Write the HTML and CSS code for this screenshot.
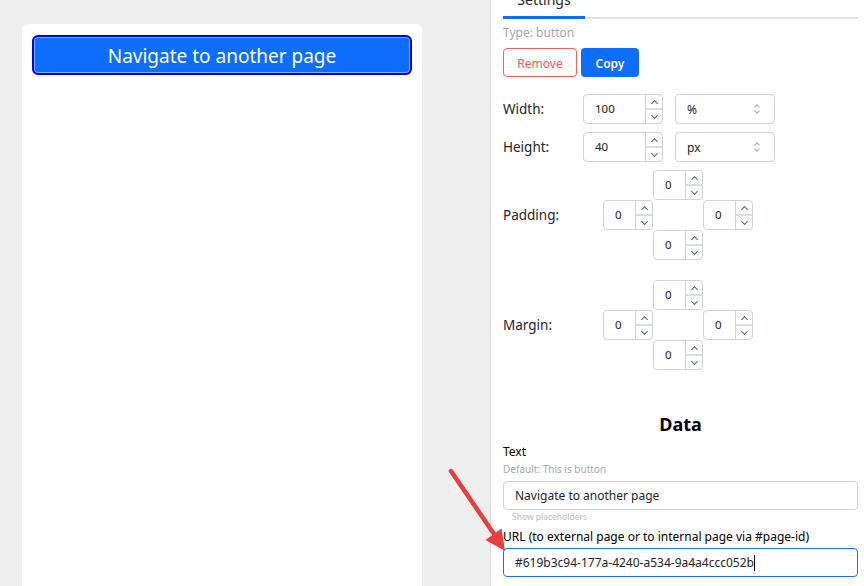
FILE: index.html
```html
<!DOCTYPE html>
<html lang="en">
<head>
    <meta charset="UTF-8">
    <title>Page editor</title>
    <link rel="stylesheet" href="styles.css">
</head>

<body>

<div class="editor">

    <div class="canvas">
        <div class="page">
            <button class="nav-button">Navigate to another page</button>
        </div>
    </div>

    <aside class="panel">

        <div class="tabs">
            <span class="tab active">Settings</span>
        </div>

        <div class="type">Type: button</div>

        <div class="actions">
            <button class="btn remove">Remove</button>
            <button class="btn copy">Copy</button>
        </div>

        <div class="row first">
            <label>Width:</label>
            <div class="num wide"><span class="val">100</span><span class="spin"><i class="up"></i><i class="down"></i></span></div>
            <div class="select"><span>%</span><span class="chev"></span></div>
        </div>

        <div class="row">
            <label>Height:</label>
            <div class="num wide"><span class="val">40</span><span class="spin"><i class="up"></i><i class="down"></i></span></div>
            <div class="select"><span>px</span><span class="chev"></span></div>
        </div>

        <div class="row box-row">
            <label>Padding:</label>
            <div class="cross">
                <div class="num top"><span class="val">0</span><span class="spin"><i class="up"></i><i class="down"></i></span></div>
                <div class="num left"><span class="val">0</span><span class="spin"><i class="up"></i><i class="down"></i></span></div>
                <div class="num right"><span class="val">0</span><span class="spin"><i class="up"></i><i class="down"></i></span></div>
                <div class="num bottom"><span class="val">0</span><span class="spin"><i class="up"></i><i class="down"></i></span></div>
            </div>
        </div>

        <div class="row box-row margin-row">
            <label>Margin:</label>
            <div class="cross">
                <div class="num top"><span class="val">0</span><span class="spin"><i class="up"></i><i class="down"></i></span></div>
                <div class="num left"><span class="val">0</span><span class="spin"><i class="up"></i><i class="down"></i></span></div>
                <div class="num right"><span class="val">0</span><span class="spin"><i class="up"></i><i class="down"></i></span></div>
                <div class="num bottom"><span class="val">0</span><span class="spin"><i class="up"></i><i class="down"></i></span></div>
            </div>
        </div>

        <h3 class="section-title">Data</h3>

        <div class="field-label">Text</div>
        <div class="hint">Default: This is button</div>
        <div class="text-input">Navigate to another page</div>
        <div class="placeholders">Show placeholders</div>

        <div class="field-label url">URL (to external page or to internal page via #page-id)</div>
        <div class="text-input focus">#619b3c94-177a-4240-a534-9a4a4ccc052b<span class="caret"></span></div>

    </aside>

    <!-- annotation arrow drawn over the screenshot -->
    <svg class="arrow" width="864" height="586" viewBox="0 0 864 586">
        <line x1="451" y1="471" x2="494" y2="534" stroke="#e53f3f" stroke-width="4.5" stroke-linecap="round"/>
        <polygon points="505,551 485.5,540 501.5,528.5" fill="#e53f3f"/>
    </svg>

</div>

</body>
</html>
```

FILE: styles.css
```css
* {
    box-sizing: border-box;
}
body {
    margin:      0;
    font-family: "Noto Sans", "Open Sans", sans-serif;
    color:       #212529;
}

.editor {
    position:   relative;
    display:    flex;
    height:     586px;
    overflow:   hidden;
}

/* the page preview on the left */
.canvas {
    flex:       none;
    width:      490px;
    background: #eeeeee;
    padding:    24px 0 0 22px;
}
.page {
    width:      400px;
    height:     100%;
    background: white;
    border-radius: 6px 6px 0 0;
    padding:    11px 10px;
}
.nav-button {
    display:    block;
    width:      100%;
    height:     40px;
    background: #0d6efd;
    border:     2px solid #0000e6;
    border-radius: 6px;
    box-shadow: inset 0 0 0 1px rgba(255,255,255,0.45);
    color:      white;
    font-family: inherit;
    font-size:  19px;
    padding:    2px 0 0;
}

/* the settings panel on the right */
.panel {
    flex:       1;
    background: white;
    border-left: 1px solid #dcdcdc;
    padding:    0 6px 0 12px;
}

.tabs {
    display:    flex;
    margin-top: -20px;
    border-bottom: 2px solid #dee2e6;
}
.tab {
    width:      82px;
    text-align: center;
    font-size:  14px;
    line-height: 20px;
    padding:    10px 0 6px;
    margin-bottom: -2px;
    border-bottom: 3px solid transparent;
    color:      #212529;
}
.tab.active {
    border-bottom-color: #0d6efd;
}

.type {
    margin-top: 6px;
    font-size:  12px;
    line-height: 16px;
    color:      #a3a6ad;
}

.actions {
    display:    flex;
    gap:        4px;
    margin-top: 7px;
}
.btn {
    height:     29px;
    padding:    1px 0 0;
    border-radius: 4px;
    font-family: inherit;
    font-size:  12px;
}
.btn.remove {
    width:      74px;
    background: white;
    border:     1px solid #f16063;
    color:      #f0565a;
}
.btn.copy {
    width:      58px;
    background: #0d6efd;
    border:     none;
    color:      white;
    font-weight: 600;
}

.row {
    display:    flex;
    align-items: center;
    margin-top: 8px;
}
.row.first {
    margin-top: 17px;
}
.row.margin-row {
    margin-top: 20px;
}
.row label {
    width:      80px;
    font-size:  13.5px;
    color:      #212529;
}
.row.box-row label {
    width:      100px;
}

/* number input with spinner */
.num {
    display:    flex;
    height:     30px;
    border:     1px solid #ced4da;
    border-radius: 4px;
    background: white;
}
.num.wide {
    width:      80px;
}
.num .val {
    flex:       1;
    padding-left: 11px;
    font-size:  11.5px;
    line-height: 28px;
    color:      #222;
}
.spin {
    width:      17px;
    display:    flex;
    flex-direction: column;
    border-left: 1px solid #ced4da;
}
.spin i {
    flex:       1;
    display:    grid;
    place-items: center;
}
.spin i + i {
    border-top: 2px solid #dadde1;
}
.spin i::before {
    content:    '';
    width:      4px;
    height:     4px;
    border:     solid #5f6368;
    transform:  rotate(45deg);
}
.spin .up::before {
    border-width: 1px 0 0 1px;
    margin-top: 3px;
}
.spin .down::before {
    border-width: 0 1px 1px 0;
    margin-bottom: 2px;
}

.select {
    display:    flex;
    align-items: center;
    justify-content: space-between;
    width:      100px;
    height:     30px;
    margin-left: 12px;
    padding:    0 14px 0 11px;
    border:     1px solid #ced4da;
    border-radius: 4px;
    font-size:  12px;
}
.chev {
    position:   relative;
    width:      6px;
    height:     10px;
}
.chev::before,
.chev::after {
    content:    '';
    position:   absolute;
    left:       1px;
    width:      3px;
    height:     3px;
    border:     solid #a9adb3;
    transform:  rotate(45deg);
}
.chev::before {
    top:        1px;
    border-width: 1px 0 0 1px;
}
.chev::after {
    bottom:     1px;
    border-width: 0 1px 1px 0;
}

/* four inputs laid out as a cross */
.cross {
    display:    grid;
    grid-template-columns: repeat(3, 50px);
    grid-template-rows:    repeat(3, 30px);
}
.cross .top    { grid-area: 1 / 2; }
.cross .left   { grid-area: 2 / 1; }
.cross .right  { grid-area: 2 / 3; }
.cross .bottom { grid-area: 3 / 2; }

.section-title {
    margin:     42px 0 0;
    text-align: center;
    font-size:  18px;
    line-height: 24px;
    font-weight: 700;
    color:      black;
}

.field-label {
    margin-top: 8px;
    font-size:  12px;
    line-height: 16px;
    color:      black;
}
.field-label.url {
    margin-top: 5px;
}
.hint {
    margin-top: 2px;
    font-size:  10px;
    line-height: 14px;
    color:      #a6a9ae;
}
.text-input {
    display:    flex;
    align-items: center;
    height:     29px;
    margin-top: 5px;
    padding-left: 11px;
    border:     1px solid #ced4da;
    border-radius: 4px;
    font-size:  12px;
    color:      #212529;
}
.field-label.url + .text-input {
    margin-top: 3px;
}
.text-input.focus {
    border-color: #1a6ff5;
}
.caret {
    width:      1px;
    height:     16px;
    background: black;
}
.placeholders {
    padding-left: 9px;
    font-size:  8.5px;
    line-height: 14px;
    color:      #b8bbc0;
}

.arrow {
    position:   absolute;
    inset:      0;
    pointer-events: none;
}
```
